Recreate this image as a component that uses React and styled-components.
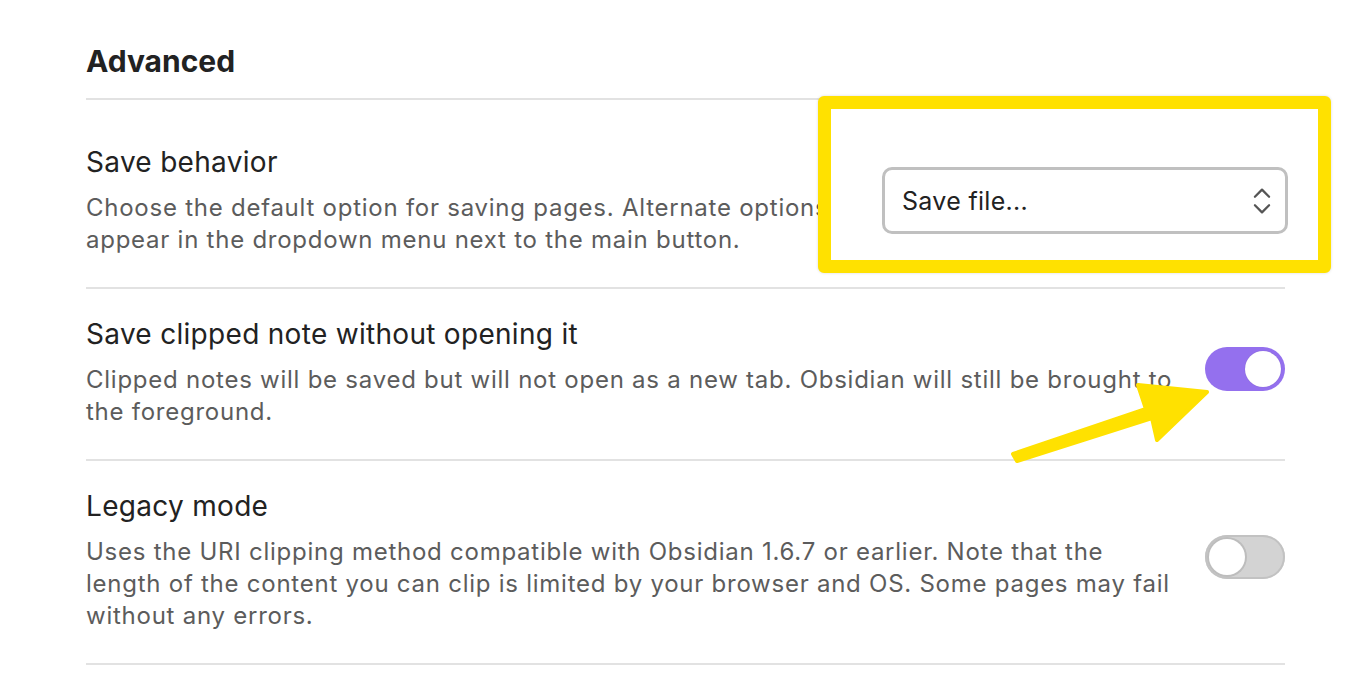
import styled, { createGlobalStyle } from 'styled-components';
import { ChevronsUpDown } from 'lucide-react';

const GlobalStyle = createGlobalStyle`
  body {
    margin: 0;
    background: #ffffff;
    font-family: Inter, "Noto Sans", "Liberation Sans", sans-serif;
  }
`;

const Page = styled.div`
  position: relative;
  width: 1354px;
  height: 678px;
  overflow: hidden;
  padding: 44px 0 0 86px;
  box-sizing: border-box;
`;

const Section = styled.div`
  width: 1199px;
`;

const Heading = styled.h2`
  margin: 0;
  padding-bottom: 20px;
  font-size: 30px;
  line-height: 34px;
  font-weight: 700;
  color: #222222;
  border-bottom: 2px solid #e2e2e2;
`;

const Row = styled.div`
  display: flex;
  align-items: center;
  gap: 28px;
  padding: ${(props) => (props.$first ? '45px' : '28px')} 0 31px;
  border-bottom: 2px solid #e2e2e2;
`;

const Info = styled.div`
  flex: 1;
`;

const Title = styled.div`
  font-size: 28px;
  line-height: 34px;
  letter-spacing: 0.3px;
  color: #222222;
`;

const Desc = styled.div`
  margin-top: 13px;
  font-size: 24px;
  line-height: 32px;
  letter-spacing: 0.75px;
  color: #5c5c5c;
`;

const Select = styled.div`
  position: relative;
  z-index: 2;
  display: flex;
  align-items: center;
  justify-content: space-between;
  width: 406px;
  height: 67px;
  margin-right: -3px;
  padding: 0 6px 0 17px;
  box-sizing: border-box;
  border: 3px solid #c0c0c0;
  border-radius: 10px;
  background: #ffffff;
  font-size: 25px;
  letter-spacing: 0.3px;
  color: #222222;
  svg {
    color: #555555;
  }
`;

const Toggle = styled.div`
  position: relative;
  flex: none;
  width: 80px;
  height: 44px;
  margin-top: -8px;
  border-radius: 22px;
  box-sizing: border-box;
  background: ${(props) => (props.$on ? '#9470ee' : '#d3d3d3')};
  box-shadow: ${(props) =>
    props.$on ? 'none' : 'inset 0 0 0 2px #c2c2c2'};
`;

const Knob = styled.div`
  position: absolute;
  top: 4px;
  left: ${(props) => (props.$on ? '40px' : '4px')};
  width: 36px;
  height: 36px;
  border-radius: 50%;
  background: #ffffff;
  box-shadow: ${(props) =>
    props.$on ? '0 0 1px rgba(0,0,0,0.2)' : '0 0 0 2px #bdbdbd'};
`;

const Highlight = styled.div`
  position: absolute;
  z-index: 1;
  left: 818px;
  top: 96px;
  width: 513px;
  height: 177px;
  box-sizing: border-box;
  border: 13px solid #ffe100;
  border-radius: 6px;
  background: #ffffff;
  box-shadow: 0 0 3px rgba(0, 0, 0, 0.15);
`;

const ArrowLayer = styled.svg`
  position: absolute;
  z-index: 3;
  left: 0;
  top: 0;
  pointer-events: none;
`;

const App = () => {
  return (
    <>
      <GlobalStyle />
      <Page>
        <Section>
          <Heading>Advanced</Heading>
          <Row $first>
            <Info>
              <Title>Save behavior</Title>
              <Desc>
                Choose the default option for saving pages. Alternate options
                appear in the dropdown menu next to the main button.
              </Desc>
            </Info>
            <Select>
              <span>Save file...</span>
              <ChevronsUpDown size={34} strokeWidth={1.6} />
            </Select>
          </Row>
          <Row>
            <Info>
              <Title>Save clipped note without opening it</Title>
              <Desc>
                Clipped notes will be saved but will not open as a new tab.
                Obsidian will still be brought to the foreground.
              </Desc>
            </Info>
            <Toggle $on>
              <Knob $on />
            </Toggle>
          </Row>
          <Row>
            <Info>
              <Title>Legacy mode</Title>
              <Desc>
                Uses the URI clipping method compatible with Obsidian 1.6.7 or
                earlier. Note that the length of the content you can clip is
                limited by your browser and OS. Some pages may fail without any
                errors.
              </Desc>
            </Info>
            <Toggle>
              <Knob />
            </Toggle>
          </Row>
        </Section>
        <Highlight />
        <ArrowLayer width="1354" height="678" viewBox="0 0 1354 678">
          <polygon
            points="1013,454 1146,409 1138,385 1207,392 1157,440 1152,418 1017,461"
            fill="#ffe100"
            stroke="#ffe100"
            strokeWidth="4"
            strokeLinejoin="round"
          />
        </ArrowLayer>
      </Page>
    </>
  );
};

export default App;
